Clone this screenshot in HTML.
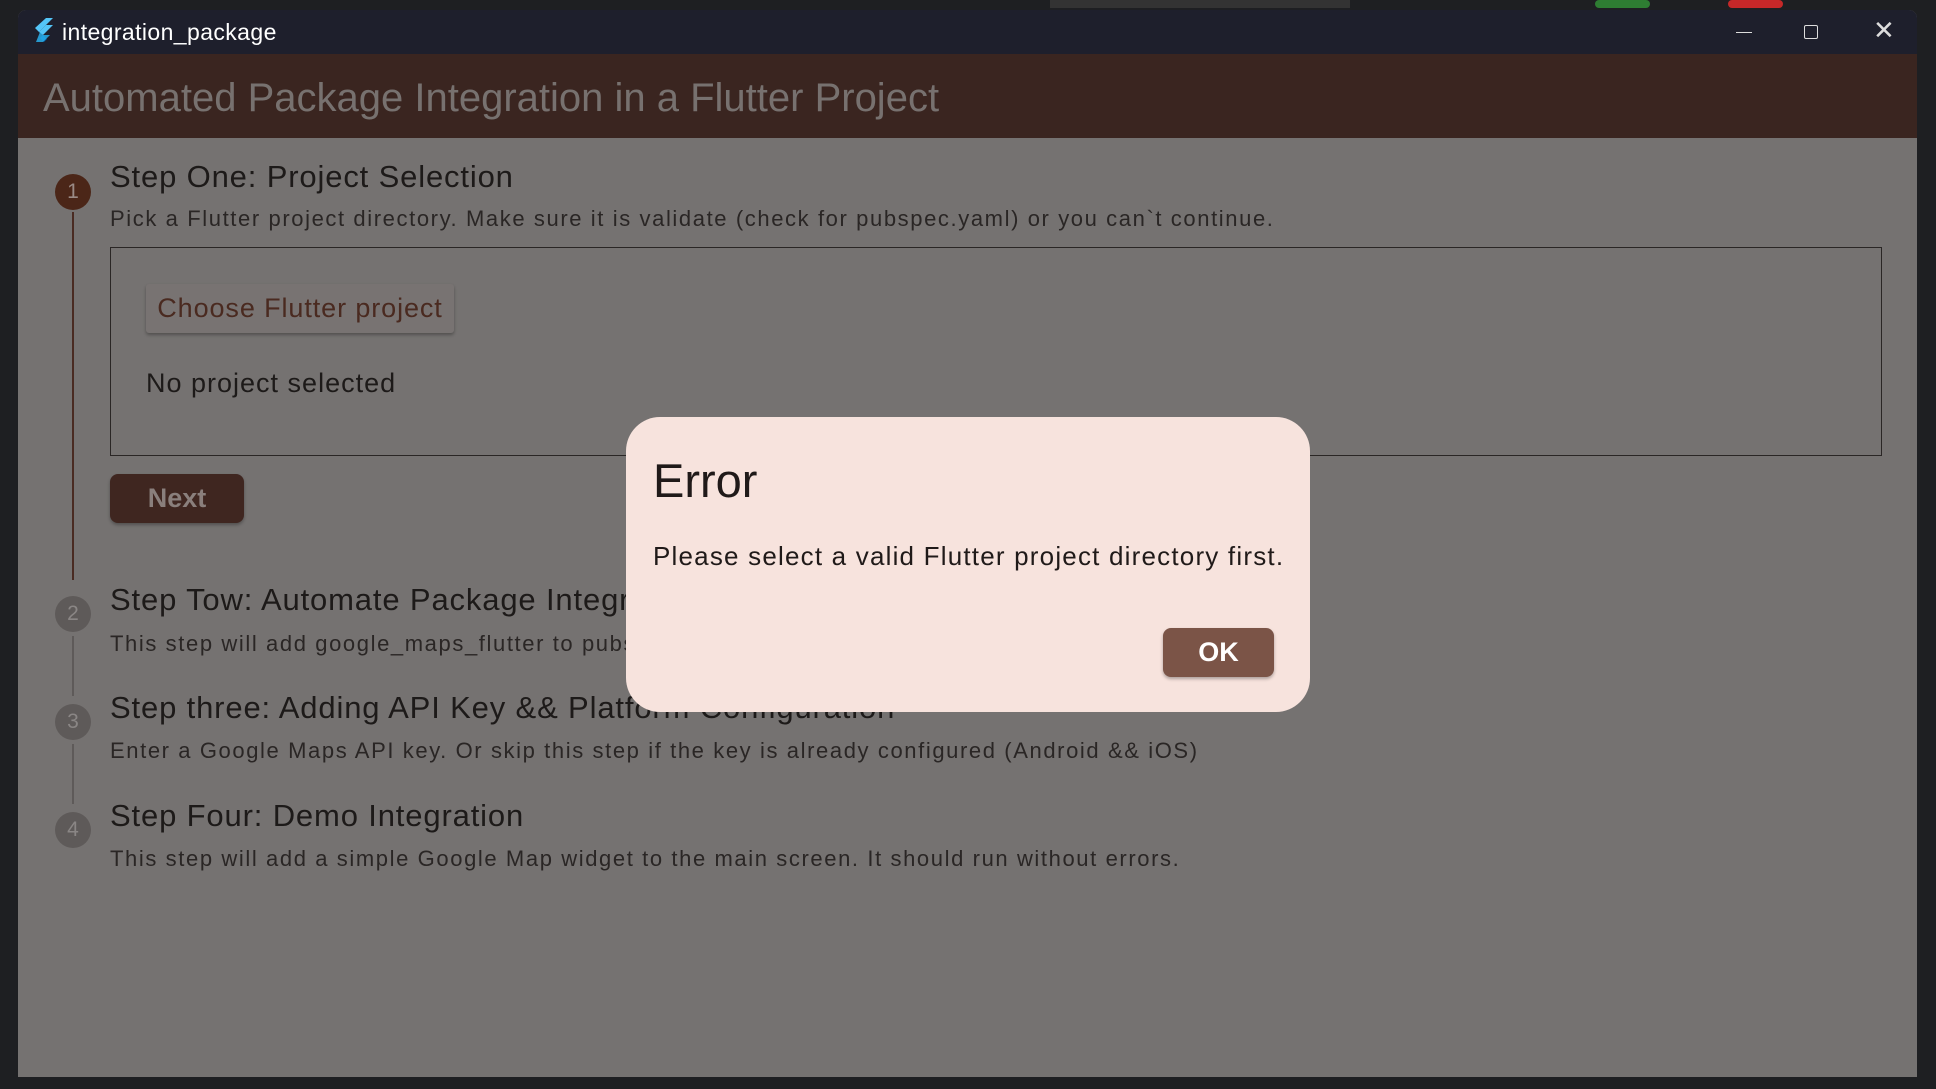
<!DOCTYPE html>
<html><head><meta charset="utf-8"><style>
*{margin:0;padding:0;box-sizing:border-box}
body{width:1936px;height:1089px;background:#1e1f22;position:relative;overflow:hidden;font-family:"Liberation Sans",sans-serif}
.a{position:absolute;white-space:nowrap}
.win{position:absolute;left:18px;top:10px;width:1899px;height:1067px;background:#757271;border-radius:8px 8px 0 0;overflow:hidden}
.tb{position:absolute;left:0;top:0;width:100%;height:44px;background:#1e1f2c;color:#fff;font-size:23px}
.ab{position:absolute;left:0;top:44px;width:100%;height:84px;background:#3a2520}
.circ{position:absolute;width:36px;height:36px;border-radius:50%;background:#5e5a59;color:#8a8685;font-size:21px;text-align:center;line-height:36px}
.t{font-size:31px;color:#1d1a19;letter-spacing:0.85px}
.s{font-size:22px;color:#2a2625;letter-spacing:1.6px}
.line{position:absolute;left:72px;width:2px;background:#4a2b22}
</style></head><body>
<div class="a" style="left:1050px;top:0;width:300px;height:8px;background:#333"></div>
<div class="a" style="left:1595px;top:0;width:55px;height:8px;background:#2e7d32;border-radius:4px"></div>
<div class="a" style="left:1728px;top:0;width:55px;height:8px;background:#c62828;border-radius:4px"></div>
<div class="win">
 <div class="tb">
  <svg class="a" style="left:14px;top:8px" width="22" height="26" viewBox="0 0 22 26"><path d="M14 0h7L7 14 3 10z" fill="#54c5f8"/><path d="M7 14l7-7h7l-10 10z" fill="#54c5f8"/><path d="M11 17l4 4-3 3-4-4z" fill="#01579b"/><path d="M8 14l3 3h7l-7 7h-7z" fill="#29b6f6" opacity=".8"/></svg>
  <div class="a" style="left:44px;top:9px;letter-spacing:0.4px">integration_package</div>
  <div class="a" style="left:1718px;top:22px;width:16px;height:1px;background:#ddd"></div>
  <div class="a" style="left:1786px;top:15px;width:14px;height:14px;border:1.5px solid #ddd;border-radius:2px"></div>
  <div class="a" style="left:1855px;top:5px;font-size:26px;color:#ddd">✕</div>
 </div>
 <div class="ab"><div class="a" style="left:25px;top:22px;font-size:40px;color:#77716f">Automated Package Integration in a Flutter Project</div></div>
 <div class="circ" style="left:37px;top:164px;background:#4b2618;color:#9a8a85">1</div>
 <div class="line" style="top:202px;height:368px;left:54px"></div>
 <div class="a t" style="left:92px;top:149px">Step One: Project Selection</div>
 <div class="a s" style="left:92px;top:196px">Pick a Flutter project directory. Make sure it is validate (check for pubspec.yaml) or you can`t continue.</div>
 <div class="a" style="left:92px;top:237px;width:1772px;height:209px;border:1.5px solid #2a2625"></div>
 <div class="a" style="left:128px;top:274px;width:308px;height:49px;background:#787372;box-shadow:0 2px 3px rgba(0,0,0,.3);border-radius:3px;color:#4a2a20;font-size:27px;text-align:center;line-height:49px;letter-spacing:0.9px">Choose Flutter project</div>
 <div class="a" style="left:128px;top:358px;font-size:27px;color:#1d1a19;letter-spacing:1px">No project selected</div>
 <div class="a" style="left:92px;top:464px;width:134px;height:49px;background:#3f2620;border-radius:8px;color:#8a7f7c;font-size:27px;font-weight:bold;text-align:center;line-height:49px;box-shadow:0 2px 3px rgba(0,0,0,.3)">Next</div>
 <div class="circ" style="left:37px;top:586px">2</div>
 <div class="line" style="top:626px;height:60px;left:54px;background:#5e5a59"></div>
 <div class="a t" style="left:92px;top:572px">Step Tow: Automate Package Integration</div>
 <div class="a s" style="left:92px;top:621px">This step will add google_maps_flutter to pubspec.yaml</div>
 <div class="circ" style="left:37px;top:694px">3</div>
 <div class="line" style="top:734px;height:60px;left:54px;background:#5e5a59"></div>
 <div class="a t" style="left:92px;top:680px">Step three: Adding API Key &amp;&amp; Platform Configuration</div>
 <div class="a s" style="left:92px;top:728px">Enter a Google Maps API key. Or skip this step if the key is already configured (Android &amp;&amp; iOS)</div>
 <div class="circ" style="left:37px;top:802px">4</div>
 <div class="a t" style="left:92px;top:788px">Step Four: Demo Integration</div>
 <div class="a s" style="left:92px;top:836px">This step will add a simple Google Map widget to the main screen. It should run without errors.</div>
 <div class="a" style="left:608px;top:407px;width:684px;height:295px;background:#f7e3dd;border-radius:34px">
  <div class="a" style="left:27px;top:36px;font-size:47px;color:#201a19">Error</div>
  <div class="a" style="left:27px;top:124px;font-size:26px;color:#201a19;letter-spacing:1.2px">Please select a valid Flutter project directory first.</div>
  <div class="a" style="left:537px;top:211px;width:111px;height:49px;background:#7b5447;border-radius:8px;color:#fff;font-size:27px;font-weight:bold;text-align:center;line-height:49px;box-shadow:0 2px 3px rgba(0,0,0,.3)">OK</div>
 </div>
</div>
</body></html>
